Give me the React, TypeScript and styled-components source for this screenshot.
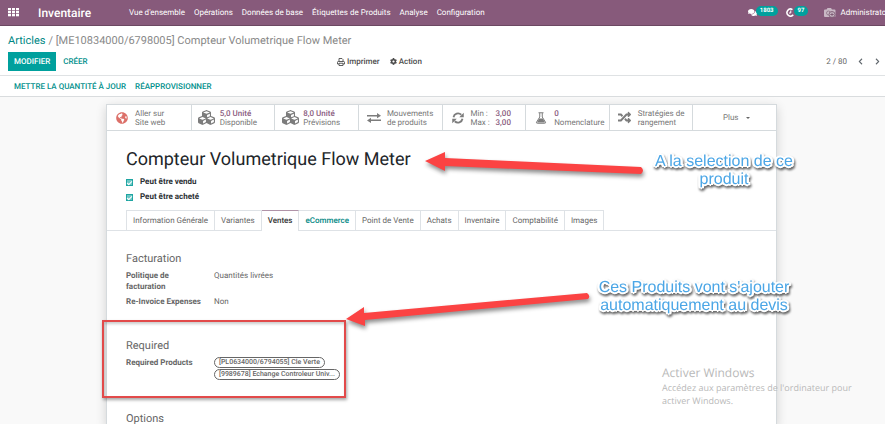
import React from "react";
import styled, { createGlobalStyle, css } from "styled-components";
import {
  FaChevronLeft,
  FaChevronRight,
  FaCog,
  FaComments,
  FaCubes,
  FaGlobeAmericas,
  FaRandom,
} from "react-icons/fa";

const GlobalStyle = createGlobalStyle`
  * { box-sizing: border-box; }
  body { margin: 0; background: #fff; font-family: Roboto, "Liberation Sans", sans-serif; font-size: 8px; line-height: 12px; color: #666; text-rendering: geometricPrecision; }
  button { font: inherit; color: inherit; background: none; border: 0; padding: 0; margin: 0; text-align: left; cursor: pointer; text-rendering: inherit; }
  a { color: inherit; text-decoration: none; }
  h1, h2, p, dl, dd, dt { margin: 0; font-weight: 400; }
`;

const Page = styled.div`
  overflow: hidden;
`;

const NavBar = styled.header`
  display: flex;
  align-items: center;
  height: 26px;
  padding-left: 8px;
  background: #875a7b;
  border-bottom: 1px solid #6c4862;
  color: #fff;
  white-space: nowrap;
`;

const AppsButton = styled.button`
  display: flex;
  width: 30px;
`;

const Brand = styled.a`
  width: 91px;
  font-size: 12px;
  font-weight: 500;
`;

const Menu = styled.nav`
  display: flex;
  flex: 1;
  gap: 9px;
`;

const Systray = styled.div`
  display: flex;
  align-items: center;
  flex: none;
  margin-right: -4px;
`;

const TrayButton = styled.button<{ $gap: number }>`
  display: flex;
  align-items: center;
  margin-right: ${(p) => p.$gap}px;
`;

const Count = styled.span`
  margin: -3px 0 0 -1px;
  padding: 0 4px;
  border-radius: 5px;
  background: #00a09d;
  font-size: 6px;
  font-weight: 700;
  line-height: 10px;
`;

const UserButton = styled.button`
  display: flex;
  align-items: center;
  gap: 4px;
`;

const ControlPanel = styled.section`
  display: grid;
  gap: 5px;
  padding: 8px 4px 4px 8px;
  border-bottom: 1px solid #dfe2e4;
`;

const Breadcrumb = styled.nav`
  font-size: 11px;
  line-height: 13px;
  color: #888;
`;

const Crumb = styled.a`
  margin-right: 3px;
  color: #008784;
`;

const Toolbar = styled.div`
  display: grid;
  grid-template-columns: 329px 1fr auto;
  align-items: center;
  height: 19px;
`;

const Cluster = styled.div<{ $gap: number }>`
  display: flex;
  align-items: center;
  gap: ${(p) => p.$gap}px;
`;

const ActionButton = styled.button<{ $primary?: boolean }>`
  font-weight: 500;
  line-height: 19px;
  color: #008f8c;
  ${(p) =>
    p.$primary &&
    css`
      padding: 0 6px;
      background: #00a09d;
      color: #fff;
    `}
`;

const ToolButton = styled.button`
  display: flex;
  align-items: center;
  gap: 2px;
  font-weight: 500;
  color: #4c4c4c;
`;

const PagerButton = styled.button`
  display: flex;
  color: #5f666c;
`;

const StatusBar = styled.section`
  display: flex;
  align-items: center;
  gap: 9px;
  height: 21px;
  padding-left: 14px;
  border-bottom: 1px solid #d9dcde;
`;

const Backdrop = styled.main`
  padding: 7px 2px 0 0;
  background: #f9f9f9;
`;

const Sheet = styled.article`
  position: relative;
  max-width: 671px;
  margin: 0 auto;
  background: #fff;
  border: 1px solid #d5dadd;
  border-bottom: 0;
  box-shadow: 0 3px 10px rgba(0, 0, 0, 0.16);
`;

const StatBar = styled.div`
  display: grid;
  grid-template-columns: repeat(8, 1fr);
  height: 26px;
  border-bottom: 1px solid #d5dadd;
`;

const StatButton = styled.button<{ $center?: boolean }>`
  display: flex;
  align-items: center;
  justify-content: ${(p) => (p.$center ? "center" : "flex-start")};
  gap: ${(p) => (p.$center ? 8 : 2)}px;
  padding: 0 0 0 4px;
  line-height: 9px;
  color: #777;
  white-space: nowrap;
  & + & {
    border-left: 1px solid #d5dadd;
  }
`;

const StatIcon = styled.span<{ $color?: string }>`
  display: flex;
  justify-content: center;
  width: 22px;
  color: ${(p) => p.$color ?? "#7c7c7c"};
`;

const StatLine = styled.span<{ $wide?: boolean }>`
  display: grid;
  grid-template-columns: ${(p) => (p.$wide ? "25px auto" : "auto")};
`;

const Value = styled.span`
  font-weight: 500;
  color: #8a5c80;
`;

const Body = styled.div`
  padding: 17px 19px 0;
`;

const Title = styled.h1`
  font-size: 18px;
  line-height: 24px;
  color: #212529;
`;

const Checks = styled.div`
  display: grid;
  gap: 3px;
  padding-top: 4px;
`;

const CheckLabel = styled.label`
  display: flex;
  align-items: center;
  gap: 7px;
  font-weight: 700;
  color: #2b2f33;
`;

const CheckBox = styled.input`
  appearance: none;
  display: grid;
  place-items: center;
  width: 7px;
  height: 7px;
  margin: 0;
  border: 1px solid #1ea5a2;
  background: #6cc6c4;
  &::after {
    content: "";
    width: 4px;
    height: 2px;
    border: solid #fff;
    border-width: 0 0 1px 1px;
    transform: rotate(-45deg);
  }
`;

const TabList = styled.div`
  display: flex;
  margin: 7px -19px 0;
  padding-left: 19px;
  border-bottom: 1px solid #dee2e6;
`;

const Tab = styled.button<{ $active?: boolean; $accent?: boolean }>`
  height: 20px;
  padding: 0 6px;
  border: 1px solid #dee2e6;
  border-width: 1px 1px 0 0;
  color: ${(p) => (p.$accent ? "#008784" : "#666")};
  white-space: nowrap;
  &:first-child {
    border-left-width: 1px;
  }
  ${(p) => p.$accent && "font-weight: 500;"}
  ${(p) =>
    p.$active &&
    css`
      margin-bottom: -1px;
      height: 21px;
      border-top-color: #b093a8;
      background: #fff;
      font-weight: 500;
      color: #333;
    `}
`;

const Group = styled.section<{ $top: number }>`
  padding-top: ${(p) => p.$top}px;
`;

const GroupTitle = styled.h2`
  font-size: 11px;
  line-height: 14px;
  color: #666;
`;

const Fields = styled.dl`
  display: grid;
  grid-template-columns: 70px 1fr;
  column-gap: 18px;
  row-gap: 4px;
  padding-top: 4px;
  line-height: 11px;
`;

const FieldName = styled.dt`
  && {
    font-weight: 700;
  }
  white-space: nowrap;
`;

const TagList = styled.dd`
  display: flex;
  flex-direction: column;
  align-items: flex-start;
  gap: 1px;
`;

const Tag = styled.span`
  padding: 0 4px;
  border: 1px solid #666;
  border-radius: 6px;
  font-size: 7px;
  font-weight: 500;
  line-height: 9px;
  white-space: nowrap;
`;

const Layer = styled.div`
  position: absolute;
  inset: 0;
  pointer-events: none;
`;

const Arrow = styled.svg<{ $x: number; $y: number }>`
  position: absolute;
  left: ${(p) => p.$x}px;
  top: ${(p) => p.$y}px;
  overflow: visible;
  filter: drop-shadow(1px 3px 2px rgba(0, 0, 0, 0.45));
`;

const Frame = styled.div`
  position: absolute;
  left: -5px;
  top: 215px;
  width: 244px;
  height: 78px;
  border: 2px solid #e24a4a;
  box-shadow: 1px 2px 3px rgba(0, 0, 0, 0.35), inset 1px 2px 3px rgba(0, 0, 0, 0.2);
`;

const Note = styled.p<{ $x: number; $y: number; $w: number }>`
  position: absolute;
  left: ${(p) => p.$x}px;
  top: ${(p) => p.$y}px;
  width: ${(p) => p.$w}px;
  font-family: "Liberation Sans", Arial, sans-serif;
  font-size: 16px;
  line-height: 18px;
  text-align: center;
  white-space: nowrap;
  color: #4ba6e6;
  text-shadow: 2px 0 #fff, -2px 0 #fff, 0 2px #fff, 0 -2px #fff, 1px 1px #fff,
    -1px 1px #fff, 1px -1px #fff, -1px -1px #fff, 2px 1px #fff, -2px 1px #fff,
    2px -1px #fff, -2px -1px #fff;
  filter: drop-shadow(1px 2px 1px rgba(0, 0, 0, 0.6));
`;

const Watermark = styled.aside`
  position: absolute;
  left: 555px;
  top: 260px;
  width: 210px;
  font-family: "Open Sans", "Noto Sans", sans-serif;
  font-size: 9px;
  line-height: 13px;
  color: #b9b9b9;
`;

const WatermarkTitle = styled.p`
  font-size: 12px;
  line-height: 16px;
`;

const GridIcon = () => (
  <svg width="11" height="9" viewBox="0 0 11 9" fill="#fff" aria-hidden="true">
    {[0, 4, 8].map((x) =>
      [0, 3, 6].map((y) => <rect key={`${x}-${y}`} x={x} y={y} width="3" height="2.3" />)
    )}
  </svg>
);

const ClockIcon = () => (
  <svg width="9" height="9" viewBox="0 0 18 18" fill="none" stroke="#fff" strokeWidth="3" aria-hidden="true">
    <path d="M14.5 13.5A7 7 0 1 1 13 3.3" />
    <path d="M9.5 5v5H6" strokeWidth="2" />
  </svg>
);

const AvatarIcon = () => (
  <svg width="12" height="11" viewBox="0 0 24 22" aria-hidden="true">
    <path d="M2 5h3l2-3h7l2 3h5a2 2 0 0 1 2 2v11a2 2 0 0 1-2 2H2a2 2 0 0 1-2-2V7a2 2 0 0 1 2-2z" fill="#c9b8c5" />
    <circle cx="9" cy="12" r="4" fill="none" stroke="#8f7488" strokeWidth="1.6" />
    <circle cx="16" cy="15" r="6" fill="#c9b8c5" stroke="#75506b" strokeWidth="1.6" />
    <path d="M16 11.5v7M12.5 15h7" stroke="#75506b" strokeWidth="1.6" />
  </svg>
);

const PrintIcon = () => (
  <svg width="8" height="8" viewBox="0 0 16 16" fill="none" stroke="currentColor" strokeWidth="1.8" aria-hidden="true">
    <path d="M4 7V1h6l2 2v4M4 12H1V8.500Q1 7 2.500 7h11Q15 7 15 8.500V12h-3M4 10.500h8V15H4z" />
  </svg>
);

const ExchangeIcon = () => (
  <svg width="14" height="10" viewBox="0 0 28 20" fill="currentColor" aria-hidden="true">
    <path d="M0 4h20V0l8 5.500-8 5V7H0zM28 13H8V9.500L0 15l8 5v-4h20z" />
  </svg>
);

const RefreshIcon = () => (
  <svg width="12" height="12" viewBox="0 0 24 24" aria-hidden="true">
    <path d="M3 10.500A9.200 9.200 0 0 1 18.500 5.500M21 13.500A9.200 9.200 0 0 1 5.500 18.500" fill="none" stroke="currentColor" strokeWidth="3.600" />
    <path d="M23.500 1.500v9h-9zM.5 22.500v-9h9z" fill="currentColor" />
  </svg>
);

const FlaskIcon = () => (
  <svg width="12" height="12" viewBox="0 0 24 24" aria-hidden="true">
    <path d="M7 1.500h10M9.500 2v8L3 20.500q-.8 2 1.500 2h15q2.300 0 1.500-2L14.500 10V2" fill="none" stroke="currentColor" strokeWidth="2" />
    <path d="M8.500 13h7l4.500 8H4z" fill="currentColor" />
  </svg>
);

const CaretIcon = () => (
  <svg width="4" height="2" viewBox="0 0 4 2" fill="#666" aria-hidden="true">
    <path d="M0 0h4L2 2z" />
  </svg>
);

const menuItems = [
  "Vue d'ensemble",
  "Opérations",
  "Données de base",
  "Étiquettes de Produits",
  "Analyse",
  "Configuration",
];

const tabs = [
  "Information Générale",
  "Variantes",
  "Ventes",
  "eCommerce",
  "Point de Vente",
  "Achats",
  "Inventaire",
  "Comptabilité",
  "Images",
];

const stats: { icon: React.ReactNode; color?: string; lines: React.ReactNode[] }[] = [
  { icon: <FaGlobeAmericas size={12} />, color: "#dc7069", lines: ["Aller sur", "Site web"] },
  { icon: <FaCubes size={17} />, lines: [<Value>5,0 Unité</Value>, "Disponible"] },
  { icon: <FaCubes size={17} />, lines: [<Value>8,0 Unité</Value>, "Prévisions"] },
  { icon: <ExchangeIcon />, lines: ["Mouvements", "de produits"] },
  {
    icon: <RefreshIcon />,
    lines: [
      <StatLine $wide>Min : <Value>3,00</Value></StatLine>,
      <StatLine $wide>Max : <Value>3,00</Value></StatLine>,
    ],
  },
  { icon: <FlaskIcon />, lines: [<Value>0</Value>, "Nomenclature"] },
  { icon: <FaRandom size={13} />, lines: ["Stratégies de", "rangement"] },
];

export default function App() {
  return (
    <Page>
      <GlobalStyle />
      <NavBar>
        <AppsButton aria-label="Applications"><GridIcon /></AppsButton>
        <Brand href="#">Inventaire</Brand>
        <Menu>
          {menuItems.map((item) => <a key={item} href="#">{item}</a>)}
        </Menu>
        <Systray>
          <TrayButton $gap={8} aria-label="Messages"><FaComments size={9} /><Count>1803</Count></TrayButton>
          <TrayButton $gap={16} aria-label="Activités"><ClockIcon /><Count>97</Count></TrayButton>
          <UserButton><AvatarIcon />Administrator</UserButton>
        </Systray>
      </NavBar>

      <ControlPanel>
        <Breadcrumb>
          <Crumb href="#">Articles</Crumb>/ [ME10834000/6798005] Compteur Volumetrique Flow Meter
        </Breadcrumb>
        <Toolbar>
          <Cluster $gap={7}>
            <ActionButton $primary>MODIFIER</ActionButton>
            <ActionButton>CRÉER</ActionButton>
          </Cluster>
          <Cluster $gap={10}>
            <ToolButton><PrintIcon />Imprimer</ToolButton>
            <ToolButton><FaCog size={7} />Action</ToolButton>
          </Cluster>
          <Cluster $gap={10}>
            <span>2 / 80</span>
            <PagerButton aria-label="Précédent"><FaChevronLeft size={7} /></PagerButton>
            <PagerButton aria-label="Suivant"><FaChevronRight size={7} /></PagerButton>
          </Cluster>
        </Toolbar>
      </ControlPanel>

      <StatusBar>
        <ActionButton>METTRE LA QUANTITÉ À JOUR</ActionButton>
        <ActionButton>RÉAPPROVISIONNER</ActionButton>
      </StatusBar>

      <Backdrop>
        <Sheet>
          <StatBar>
            {stats.map((s, i) => (
              <StatButton key={i}>
                <StatIcon $color={s.color}>{s.icon}</StatIcon>
                <span>
                  {s.lines.map((line, j) => <StatLine key={j}>{line}</StatLine>)}
                </span>
              </StatButton>
            ))}
            <StatButton $center>Plus <CaretIcon /></StatButton>
          </StatBar>

          <Body>
            <Title>Compteur Volumetrique Flow Meter</Title>
            <Checks>
              <CheckLabel><CheckBox type="checkbox" defaultChecked />Peut être vendu</CheckLabel>
              <CheckLabel><CheckBox type="checkbox" defaultChecked />Peut être acheté</CheckLabel>
            </Checks>
            <TabList role="tablist">
              {tabs.map((t) => (
                <Tab key={t} role="tab" aria-selected={t === "Ventes"} $active={t === "Ventes"} $accent={t === "eCommerce"}>
                  {t}
                </Tab>
              ))}
            </TabList>

            <Group $top={21}>
              <GroupTitle>Facturation</GroupTitle>
              <Fields>
                <FieldName>Politique de<br />facturation</FieldName>
                <dd>Quantités livrées</dd>
                <FieldName>Re-Invoice Expenses</FieldName>
                <dd>Non</dd>
              </Fields>
            </Group>

            <Group $top={32}>
              <GroupTitle>Required</GroupTitle>
              <Fields>
                <FieldName>Required Products</FieldName>
                <TagList>
                  <Tag>[PL0634000/6794055] Cle Verte</Tag>
                  <Tag>[9989678] Echange Controleur Univ...</Tag>
                </TagList>
              </Fields>
            </Group>

            <Group $top={32}>
              <GroupTitle>Options</GroupTitle>
            </Group>
          </Body>

          <Layer>
            <Watermark>
              <WatermarkTitle>Activer Windows</WatermarkTitle>
              Accédez aux paramètres de l'ordinateur pour activer Windows.
            </Watermark>
            <Frame />
            <Arrow $x={318} $y={47} width="218" height="26" viewBox="0 0 218 26" aria-hidden="true">
              <path d="M0 9L20 0V6L216 15Q220 18.500 216 22L20 14V19Z" fill="#fb4343" />
            </Arrow>
            <Arrow $x={239} $y={188} width="244" height="34" viewBox="0 0 244 34" aria-hidden="true">
              <path d="M0 26L18 14V20L241 0Q245 3 242 6L19 27V33Z" fill="#fb4343" />
            </Arrow>
            <Note $x={537} $y={48} $w={160}>A la selection de ce<br />produit</Note>
            <Note $x={487} $y={174} $w={200}>Ces Produits vont s'ajouter<br />automatiquement au devis</Note>
          </Layer>
        </Sheet>
      </Backdrop>
    </Page>
  );
}
